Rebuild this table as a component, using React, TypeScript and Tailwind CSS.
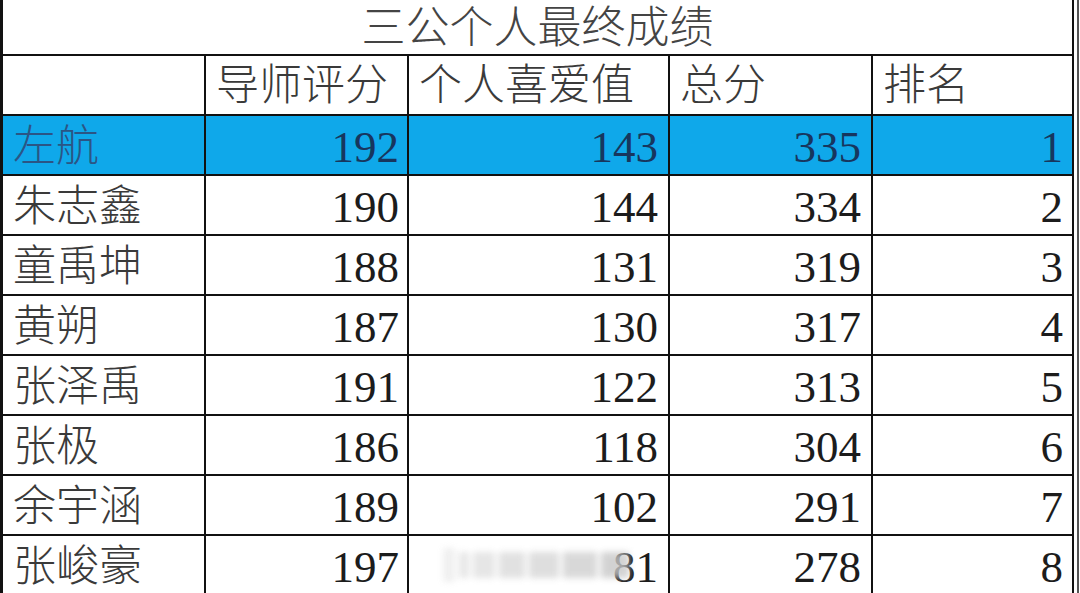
import React from 'react';

const rows = [
  { name: '左航', a: 192, b: 143, total: 335, rank: 1 },
  { name: '朱志鑫', a: 190, b: 144, total: 334, rank: 2 },
  { name: '童禹坤', a: 188, b: 131, total: 319, rank: 3 },
  { name: '黄朔', a: 187, b: 130, total: 317, rank: 4 },
  { name: '张泽禹', a: 191, b: 122, total: 313, rank: 5 },
  { name: '张极', a: 186, b: 118, total: 304, rank: 6 },
  { name: '余宇涵', a: 189, b: 102, total: 291, rank: 7 },
  { name: '张峻豪', a: 197, b: 81, total: 278, rank: 8 },
];

const cjk = "font-['Liberation_Serif','Noto_Sans_CJK_SC',serif]";

const App: React.FC = () => {
  return (
    <div className="w-[1080px] h-[593px] overflow-hidden bg-white flex">
      <div className="border-l-[3px] border-r-2 border-[#111] bg-[#111] grid grid-cols-[201px_201px_259px_201px_199px] grid-rows-[54px_repeat(9,58px)] gap-[2px] content-start">
        {/* Title */}
        <div className={`col-span-5 bg-white flex items-center justify-center text-[44px] leading-none font-light text-[#444] pt-1 ${cjk}`}>
          三公个人最终成绩
        </div>

        {/* Header */}
        <div className="bg-white"></div>
        {['导师评分', '个人喜爱值', '总分', '排名'].map((h) => (
          <div key={h} className={`bg-white flex items-center pl-[10px] text-[43px] leading-none font-light text-[#3a3a3a] ${cjk}`}>
            {h}
          </div>
        ))}

        {/* Rows */}
        {rows.map((r, idx) => {
          const hl = idx === 0;
          const bg = hl ? 'bg-[#0fa8ea]' : 'bg-white';
          const num = hl ? 'text-[#17365e]' : 'text-[#1c1c1c]';
          return (
            <React.Fragment key={r.name}>
              <div className={`${bg} flex items-center pl-[10px] pt-[2px] text-[43px] leading-none font-light ${hl ? 'text-[#2b5585]' : 'text-[#3a3a3a]'} ${cjk}`}>
                {r.name}
              </div>
              <div className={`${bg} flex items-center justify-end pr-[8px] pt-[4px] text-[45px] leading-none ${num} ${cjk}`}>
                {r.a}
              </div>
              <div className={`${bg} relative flex items-center justify-end pr-[10px] pt-[4px] text-[45px] leading-none ${num} ${cjk}`}>
                {r.b}
                {r.name === '张峻豪' && (
                  <div className="absolute left-[34px] top-[12px] w-[206px] h-[34px] flex items-stretch gap-[4px] blur-[3px] opacity-80">
                    <div className="w-[12px] bg-[#ececec]"></div>
                    <div className="w-[10px] bg-[#e2e2e2] my-1"></div>
                    <div className="w-[22px] bg-[#e0e0e0] my-1"></div>
                    <div className="w-[26px] bg-[#dadada] my-1"></div>
                    <div className="w-[30px] bg-[#d6d6d6] my-1"></div>
                    <div className="w-[34px] bg-[#cfcfcf] my-1"></div>
                    <div className="w-[28px] bg-[#c8c8c8] my-1"></div>
                  </div>
                )}
              </div>
              <div className={`${bg} flex items-center justify-end pr-[10px] pt-[4px] text-[45px] leading-none ${num} ${cjk}`}>
                {r.total}
              </div>
              <div className={`${bg} flex items-center justify-end pr-[9px] pt-[4px] text-[45px] leading-none ${num} ${cjk}`}>
                {r.rank}
              </div>
            </React.Fragment>
          );
        })}
      </div>
      <div className="w-[6px] flex justify-center pl-[1px]">
        <div className="w-[2px] bg-[#555]"></div>
      </div>
    </div>
  );
};

export default App;
